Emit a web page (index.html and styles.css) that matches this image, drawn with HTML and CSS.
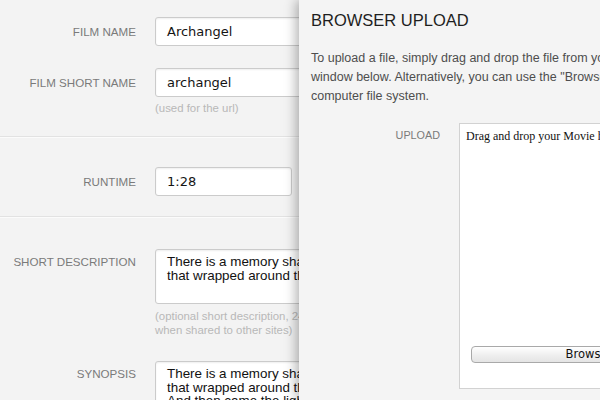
FILE: index.html
```html
<!DOCTYPE html>
<html>
<head>
<meta charset="utf-8">
<link rel="stylesheet" href="styles.css">
</head>
<body>
<div class="page">
  <section class="group g1">
    <div class="row">
      <div class="lbl">FILM NAME</div>
      <div class="field"><div class="input wide">Archangel</div></div>
    </div>
    <div class="row r2">
      <div class="lbl">FILM SHORT NAME</div>
      <div class="field">
        <div class="input wide">archangel</div>
        <div class="hint">(used for the url)</div>
      </div>
    </div>
  </section>
  <section class="group g2">
    <div class="row">
      <div class="lbl">RUNTIME</div>
      <div class="field"><div class="input short">1:28</div></div>
    </div>
  </section>
  <section class="group g3">
    <div class="row">
      <div class="lbl lbl-top">SHORT DESCRIPTION</div>
      <div class="field">
        <div class="textarea ta1">There is a memory shared by everyone<br>that wrapped around the world</div>
        <div class="hint hint-b">(optional short description, 240 characters max, used<br>when shared to other sites)</div>
      </div>
    </div>
    <div class="row r-syn">
      <div class="lbl lbl-top">SYNOPSIS</div>
      <div class="field">
        <div class="textarea ta2">There is a memory shared by everyone<br>that wrapped around the world<br>And then came the light</div>
      </div>
    </div>
  </section>
</div>

<aside class="panel">
  <h1 class="title">BROWSER UPLOAD</h1>
  <p class="intro">To upload a file, simply drag and drop the file from your desktop into the<br>window below. Alternatively, you can use the "Browse..." button to search your<br>computer file system.</p>
  <div class="up-row">
    <div class="up-lbl">UPLOAD</div>
    <div class="dropbox">
      <div class="drop-text">Drag and drop your Movie here</div>
      <div class="browse">Browse...</div>
    </div>
  </div>
</aside>
</body>
</html>
```
FILE: styles.css
```css
html, body {
  margin: 0;
  padding: 0;
}
body {
  width: 600px;
  height: 400px;
  overflow: hidden;
  background: #f3f3f3;
  font-family: "Liberation Sans", Arial, sans-serif;
  position: relative;
}
.page {
  width: 600px;
}
.group {
  border-bottom: 1px solid #e2e2e2;
  box-shadow: 0 1px 0 #fbfbfb;
}
.g1 { padding: 17px 0 21px; }
.g2 { padding: 30px 0 20px; }
.g3 { padding: 32px 0 0; border-bottom: none; box-shadow: none; }

.row {
  display: grid;
  grid-template-columns: 136px 1fr;
  column-gap: 19px;
  align-items: start;
}
.r2 { margin-top: 22px; }
.r-syn { margin-top: 24px; }

.lbl {
  text-align: right;
  font-size: 11.6px;
  color: #7a7a7a;
  line-height: 29px;
  white-space: nowrap;
}
.lbl-top { line-height: 25px; }

.input {
  box-sizing: border-box;
  height: 29px;
  border: 1px solid #cbcbcb;
  border-radius: 3px;
  background: #fff;
  box-shadow: inset 0 1px 2px rgba(0,0,0,0.07);
  padding: 0 11px;
  font-family: "DejaVu Sans", sans-serif;
  font-size: 13px;
  line-height: 27px;
  color: #141414;
  white-space: nowrap;
  overflow: hidden;
}
.wide { width: 320px; }
.short { width: 137px; }

.textarea {
  box-sizing: border-box;
  width: 320px;
  border: 1px solid #cbcbcb;
  border-radius: 3px;
  background: #fff;
  box-shadow: inset 0 1px 2px rgba(0,0,0,0.07);
  padding: 5px 11px;
  font-size: 13.4px;
  line-height: 13.6px;
  color: #111;
  white-space: nowrap;
  overflow: hidden;
}
.ta1 { height: 55px; }
.ta2 { height: 80px; }

.hint {
  font-size: 11.4px;
  line-height: 14px;
  color: #b8b8b8;
  margin-top: 4px;
  white-space: nowrap;
}
.hint-b { margin-top: 5px; }

.panel {
  position: absolute;
  left: 299px;
  top: 0;
  width: 440px;
  height: 400px;
  box-sizing: border-box;
  padding: 10px 0 0 12px;
  background: #f4f4f4;
  box-shadow: -3px 0 11px rgba(0,0,0,0.3);
}
.title {
  margin: 0;
  font-size: 16.5px;
  font-weight: normal;
  line-height: 20px;
  color: #1e1e1e;
}
.intro {
  margin: 19px 0 0;
  font-size: 12.5px;
  line-height: 19.2px;
  color: #4e4e4e;
  white-space: nowrap;
}
.up-row {
  margin-top: 16px;
  display: grid;
  grid-template-columns: 129px 266px;
  column-gap: 19px;
  align-items: start;
}
.up-lbl {
  text-align: right;
  font-size: 10.8px;
  line-height: 25px;
  color: #7a7a7a;
}
.dropbox {
  box-sizing: border-box;
  width: 266px;
  height: 266px;
  background: #fff;
  border: 1px solid #d2d2d2;
  display: flex;
  flex-direction: column;
  padding: 5px 11px 25px 6px;
}
.drop-text {
  font-family: "Liberation Serif", "Times New Roman", serif;
  font-size: 12px;
  line-height: 14px;
  color: #111;
  white-space: nowrap;
}
.browse {
  margin-top: auto;
  margin-left: 5px;
  box-sizing: border-box;
  height: 17px;
  border: 1px solid #a9a9a9;
  border-radius: 4px;
  background: linear-gradient(#ffffff, #ededed 60%, #e4e4e4);
  font-family: "DejaVu Sans", sans-serif;
  font-size: 11.5px;
  line-height: 15px;
  text-align: center;
  color: #111;
}
```
